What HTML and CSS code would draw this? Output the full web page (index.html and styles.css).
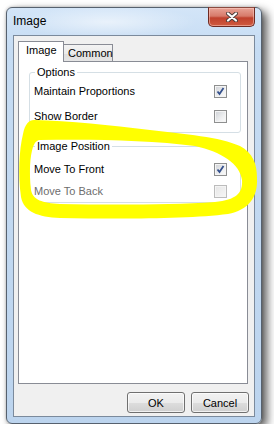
FILE: index.html
```html
<!DOCTYPE html>
<html lang="en">
<head>
    <meta charset="UTF-8">
    <meta name="viewport" content="width=device-width, initial-scale=1.0">
    <title>Image</title>
    <link rel="stylesheet" href="styles.css">
</head>
<body>
    <div class="page">
        <div class="window">
            <div class="titlebar">
                <span class="title">Image</span>
                <button class="close" aria-label="Close">
                    <svg width="12" height="10" viewBox="0 0 12 10">
                        <path d="M2 1.5 L10 8.5 M10 1.5 L2 8.5" stroke="#4a3b38" stroke-width="4" stroke-linecap="round"/>
                        <path d="M2 1.5 L10 8.5 M10 1.5 L2 8.5" stroke="#ffffff" stroke-width="2.2" stroke-linecap="round"/>
                    </svg>
                </button>
            </div>

            <div class="client">
                <div class="tabs">
                    <div class="tab active">Image</div>
                    <div class="tab">Common</div>
                </div>

                <div class="panel">
                    <fieldset class="group">
                        <legend>Options</legend>
                        <div class="row">
                            <span>Maintain Proportions</span>
                            <span class="check checked">
                                <svg width="11" height="11" viewBox="0 0 11 11"><path d="M2.5 5.5 L4.5 8 L8.5 2" fill="none" stroke="#34508c" stroke-width="1.8"/></svg>
                            </span>
                        </div>
                        <div class="row">
                            <span>Show Border</span>
                            <span class="check"></span>
                        </div>
                    </fieldset>

                    <fieldset class="group compact">
                        <legend>Image Position</legend>
                        <div class="row">
                            <span>Move To Front</span>
                            <span class="check checked">
                                <svg width="11" height="11" viewBox="0 0 11 11"><path d="M2.5 5.5 L4.5 8 L8.5 2" fill="none" stroke="#34508c" stroke-width="1.8"/></svg>
                            </span>
                        </div>
                        <div class="row disabled">
                            <span>Move To Back</span>
                            <span class="check"></span>
                        </div>
                    </fieldset>
                </div>

                <div class="buttons">
                    <button class="btn">OK</button>
                    <button class="btn">Cancel</button>
                </div>
            </div>
        </div>
    </div>

    <!-- hand drawn highlight over the position group -->
    <svg class="marker" width="274" height="436" viewBox="0 0 274 436">
        <path fill="#ffff00" fill-rule="evenodd" d="
            M34 120 C70 121 110 125 150 130 C185 134 220 137 240 146 C253 153 257 164 257 178 C258 198 248 210 228 214
            C190 219 120 219 60 218 C38 217 24 212 21 197 C18 175 19 150 23 134 C25 124 29 120 34 120 Z
            M40 140 C90 139 150 140 195 146 C222 152 240 164 242 180 C243 193 236 200 215 202
            C170 205 110 205 60 204 C42 203 33 200 31 190 C29 172 30 156 33 147 C35 142 37 140 40 140 Z"/>
    </svg>
</body>
</html>
```

FILE: styles.css
```css
* {
    box-sizing: border-box;
    margin: 0;
    padding: 0;
}

body {
    background-color: #ffffff;
    font-family: "Liberation Sans", Arial, sans-serif;
    font-size: 11px;
    color: #000000;
}

.page {
    padding: 7px 0 0 6px;
}

.window {
    display: flex;
    flex-direction: column;
    width: 256px;
    height: 417px;
    border: 1px solid #56616e;
    border-radius: 6px;
    background:
        radial-gradient(ellipse 90px 16px at 100px 14px, rgba(255, 255, 255, 0.55), rgba(255, 255, 255, 0) 100%),
        linear-gradient(to bottom, #d3e5f8 0, #c6dcf3 40px, #bcd4ee 100%);
    box-shadow: 5px 4px 10px rgba(0, 0, 0, 0.65), 0 0 3px rgba(0, 0, 0, 0.25);
}

/* TITLE BAR */
.titlebar {
    display: flex;
    justify-content: space-between;
    align-items: flex-start;
    height: 27px;
    padding: 0 6px;
}

.title {
    margin-top: 6px;
    font-size: 12px;
    line-height: 15px;
}

.close {
    display: flex;
    justify-content: center;
    align-items: center;
    width: 47px;
    height: 20px;
    margin-top: -1px;
    border: 1px solid #6e2a22;
    border-top-color: #8a4a40;
    border-radius: 0 0 5px 5px;
    background: linear-gradient(to bottom, #e8a396 0, #d77a6a 45%, #c0412d 55%, #cf5a3f 100%);
    box-shadow: inset 0 0 0 1px rgba(255, 210, 200, 0.5);
}

/* CLIENT AREA */
.client {
    display: flex;
    flex-direction: column;
    flex: 1;
    margin: 0 6px 6px;
    padding: 5px 6px 3px 4px;
    border: 1px solid #7b8a9c;
    background-color: #f0f0f0;
}

.tabs {
    display: flex;
    align-items: flex-end;
    height: 21px;
    margin-bottom: -1px;
}

.tab {
    height: 18px;
    padding: 2px 0 0 4px;
    width: 50px;
    margin-left: -1px;
    border: 1px solid #898c95;
    border-bottom: none;
    background: linear-gradient(to bottom, #f3f3f3 0, #ebebeb 50%, #dedede 51%, #e6e6e6 100%);
    line-height: 13px;
}

.tab.active {
    position: relative;
    z-index: 1;
    width: 46px;
    height: 21px;
    margin-left: 0;
    padding: 2px 0 0 7px;
    background: #ffffff;
}

.panel {
    flex: 1;
    padding: 4px 6px 0 10px;
    border: 1px solid #898c95;
    background-color: #ffffff;
}

.group {
    padding: 0 13px 3px 4px;
    border: 1px solid #d5dfe5;
    border-radius: 3px;
}

.group legend {
    margin-left: 1px;
    padding: 0 2px;
    line-height: 13px;
}

.row {
    display: flex;
    justify-content: space-between;
    align-items: center;
    height: 25px;
    line-height: 13px;
}

.group.compact {
    margin-top: 7px;
    padding-top: 5px;
    padding-bottom: 0;
}

.group.compact .row {
    height: 22px;
}

.row.disabled {
    color: #6d6d6d;
}

.check {
    display: flex;
    justify-content: center;
    align-items: center;
    width: 13px;
    height: 13px;
    border: 1px solid #8e8f8f;
    background: linear-gradient(135deg, #cdd0d5 0, #eeeff0 60%, #fbfbfb 100%);
    box-shadow: inset 0 0 0 1px #f4f4f4;
}

.row.disabled .check {
    border-color: #bcbcbc;
    background: linear-gradient(135deg, #e6e6e6 0, #f6f6f6 100%);
}

/* BUTTONS */
.buttons {
    display: flex;
    justify-content: flex-end;
    gap: 6px;
    margin: 8px -1px 0 0;
}

.btn {
    width: 58px;
    height: 21px;
    border: 1px solid #707070;
    border-radius: 3px;
    background: linear-gradient(to bottom, #f2f2f2 0, #ebebeb 50%, #dddddd 51%, #cfcfcf 100%);
    box-shadow: inset 0 0 0 1px rgba(255, 255, 255, 0.7);
    font-family: "Liberation Sans", Arial, sans-serif;
    font-size: 11px;
    color: #000000;
}

.marker {
    position: absolute;
    top: 0;
    left: 0;
    pointer-events: none;
}
```
